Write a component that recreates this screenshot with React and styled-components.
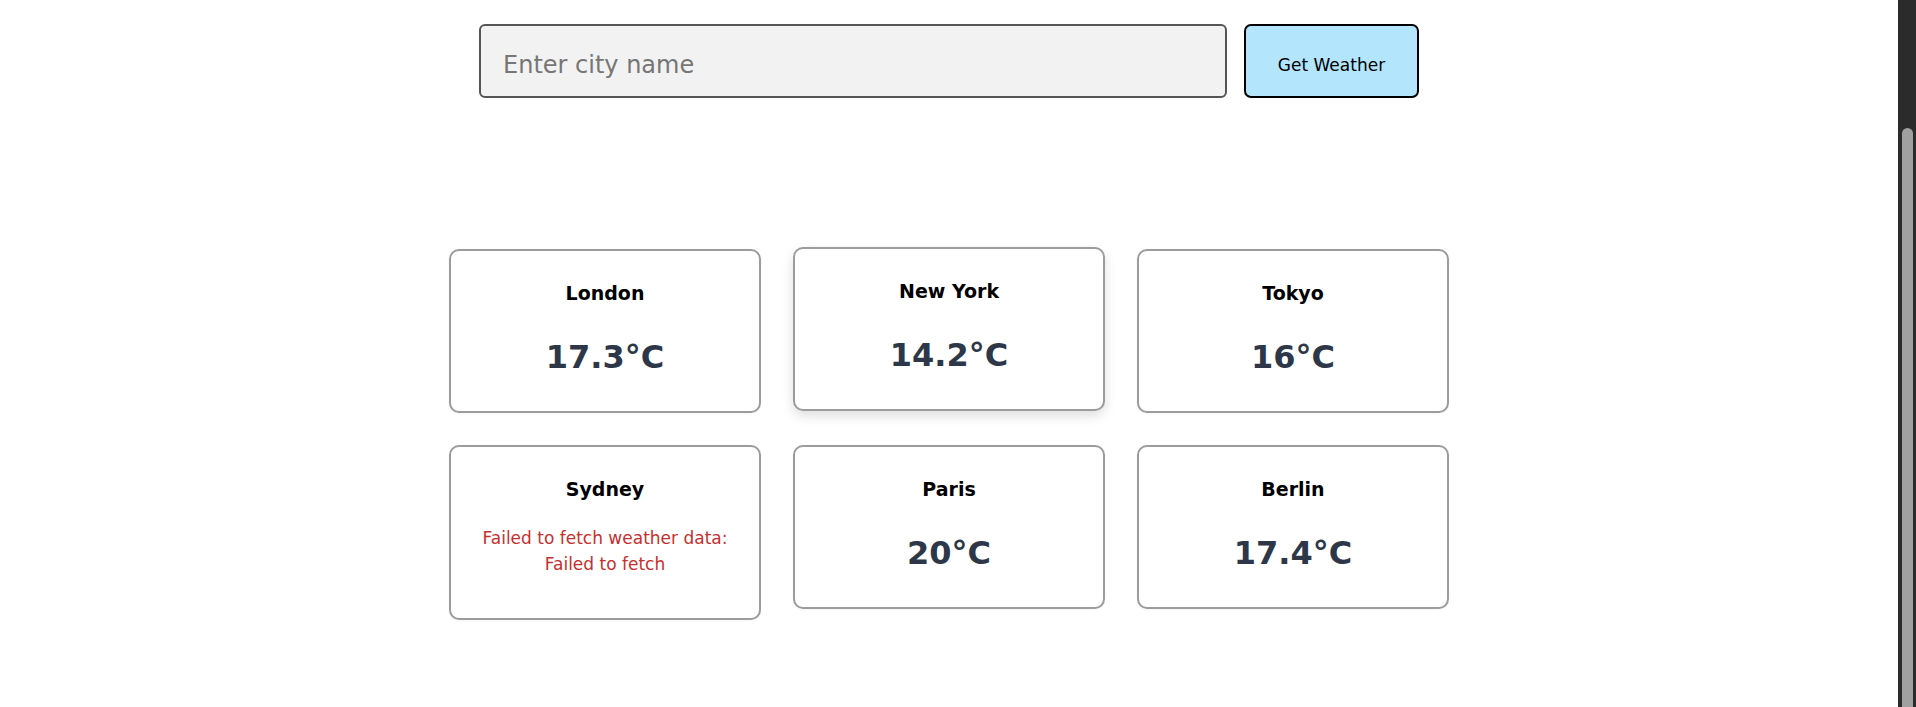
import React, { useLayoutEffect } from "react";
import styled, { createGlobalStyle } from "styled-components";

const GlobalStyle = createGlobalStyle`
  html {
    background: #ffffff;
  }
  body {
    margin: 0;
    font-family: "DejaVu Sans", "Liberation Sans", sans-serif;
    color: #000;
  }
  * { box-sizing: border-box; }
`;

const Page = styled.main`
  padding: 180px 18px 87px 0;
  display: flex;
  flex-direction: column;
  align-items: center;
`;

const ScrollTrack = styled.div`
  position: fixed;
  top: 0;
  right: 0;
  bottom: 0;
  width: 18px;
  background: #2b2b2b;
  display: flex;
  flex-direction: column;
  padding: 128px 3px 0 4px;
`;

const ScrollThumb = styled.div`
  flex: 1;
  background: #a0a0a0;
  border-radius: 6px 6px 0 0;
`;

const SearchBar = styled.form`
  display: flex;
  gap: 17px;
  justify-content: center;
  margin: 0;
`;

const CityInput = styled.input`
  width: 748px;
  height: 74px;
  padding: 7px 22px 0;
  border: 2px solid #555555;
  border-radius: 6px;
  background: #f2f2f2;
  font-family: "DejaVu Sans", sans-serif;
  font-size: 24px;
  color: #222;
  outline: none;
  &::placeholder {
    color: #767676;
  }
`;

const SearchButton = styled.button`
  width: 175px;
  height: 74px;
  border: 2px solid #000;
  border-radius: 7px;
  background: #b3e5fc;
  font-family: "DejaVu Sans", sans-serif;
  font-size: 17px;
  color: #000;
  cursor: pointer;
  padding: 7px 0 0;
`;

const Grid = styled.section`
  margin-top: 151px;
  display: grid;
  grid-template-columns: repeat(3, 312px);
  gap: 32px;
  align-items: start;
`;

const Card = styled.article`
  border: 2px solid #9c9c9c;
  border-radius: 10px;
  background: #fff;
  padding: 30px 20px 35px;
  text-align: center;
  box-shadow: ${(p) =>
    p.$raised ? "0 5px 12px rgba(0,0,0,0.13)" : "0 1px 3px rgba(0,0,0,0.04)"};
  transform: ${(p) => (p.$raised ? "translateY(-2px)" : "none")};
`;

const CityName = styled.h2`
  margin: 0;
  font-size: 19px;
  line-height: 24px;
  font-weight: 700;
  color: #000;
`;

const Temperature = styled.p`
  margin: 33px 0 0;
  font-size: 32px;
  line-height: 38px;
  font-weight: 700;
  color: #2d3748;
`;

const ErrorText = styled.p`
  margin: 24px 0 6px;
  font-size: 17px;
  line-height: 26px;
  color: #c53030;
`;

const cities = [
  { name: "London", temp: "17.3°C" },
  { name: "New York", temp: "14.2°C", raised: true },
  { name: "Tokyo", temp: "16°C" },
  { name: "Sydney", error: "Failed to fetch weather data: Failed to fetch" },
  { name: "Paris", temp: "20°C" },
  { name: "Berlin", temp: "17.4°C" },
];

export default function App() {
  useLayoutEffect(() => {
    window.scrollTo(0, document.documentElement.scrollHeight);
  }, []);

  return (
    <>
      <GlobalStyle />
      <Page>
        <SearchBar onSubmit={(e) => e.preventDefault()}>
          <CityInput type="text" placeholder="Enter city name" />
          <SearchButton type="submit">Get Weather</SearchButton>
        </SearchBar>
        <Grid>
          {cities.map((c) => (
            <Card key={c.name} $raised={c.raised}>
              <CityName>{c.name}</CityName>
              {c.error ? (
                <ErrorText>{c.error}</ErrorText>
              ) : (
                <Temperature>{c.temp}</Temperature>
              )}
            </Card>
          ))}
        </Grid>
      </Page>
      <ScrollTrack aria-hidden="true">
        <ScrollThumb />
      </ScrollTrack>
    </>
  );
}
